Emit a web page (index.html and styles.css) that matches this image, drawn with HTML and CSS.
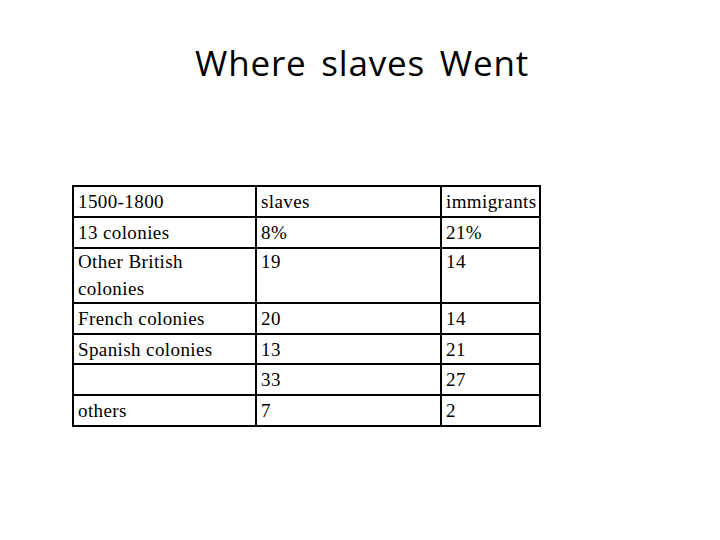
FILE: index.html
```html
<!DOCTYPE html>
<html>
<head>
<meta charset="utf-8">
<link rel="stylesheet" href="styles.css">
</head>
<body>
<div class="slide">
  <h1 class="title">Where slaves Went</h1>
  <table class="data">
    <colgroup>
      <col class="c1"><col class="c2"><col class="c3">
    </colgroup>
    <tr><td>1500-1800</td><td>slaves</td><td>immigrants</td></tr>
    <tr><td>13 colonies</td><td>8%</td><td>21%</td></tr>
    <tr class="tall"><td>Other British colonies</td><td>19</td><td>14</td></tr>
    <tr><td>French colonies</td><td>20</td><td>14</td></tr>
    <tr class="short"><td>Spanish colonies</td><td>13</td><td>21</td></tr>
    <tr><td></td><td>33</td><td>27</td></tr>
    <tr><td>others</td><td>7</td><td>2</td></tr>
  </table>
</div>
</body>
</html>
```
FILE: styles.css
```css
html, body {
  margin: 0;
  padding: 0;
  background: #fff;
}
.slide {
  width: 720px;
  height: 540px;
  display: flex;
  flex-direction: column;
  align-items: flex-start;
}
.title {
  align-self: stretch;
  margin: 0;
  padding-top: 41px;
  padding-left: 4px;
  height: 144px;
  box-sizing: border-box;
  text-align: center;
  font-family: "Open Sans", "Noto Sans", sans-serif;
  font-weight: 400;
  font-size: 35px;
  line-height: 44px;
  letter-spacing: 0.8px;
  word-spacing: 5px;
  color: #000;
}
.data {
  margin-left: 72px;
  margin-top: 41px;
  border-collapse: collapse;
  table-layout: fixed;
  width: 467px;
  font-family: "Liberation Serif", "Times New Roman", serif;
  font-size: 19px;
  line-height: 27px;
  letter-spacing: 0.4px;
  color: #000;
}
.c1 { width: 183px; }
.c2 { width: 185px; }
.c3 { width: 99px; }
.data td {
  border: 2px solid #000;
  padding: 1px 4px 0 4px;
  height: 28px;
  vertical-align: top;
  white-space: normal;
}
.data tr.tall td {
  height: 52px;
  padding-top: 0;
  line-height: 26.5px;
}
.data tr.tall td:first-child { padding-right: 12px; }
.data tr.short td { height: 27px; }
```
